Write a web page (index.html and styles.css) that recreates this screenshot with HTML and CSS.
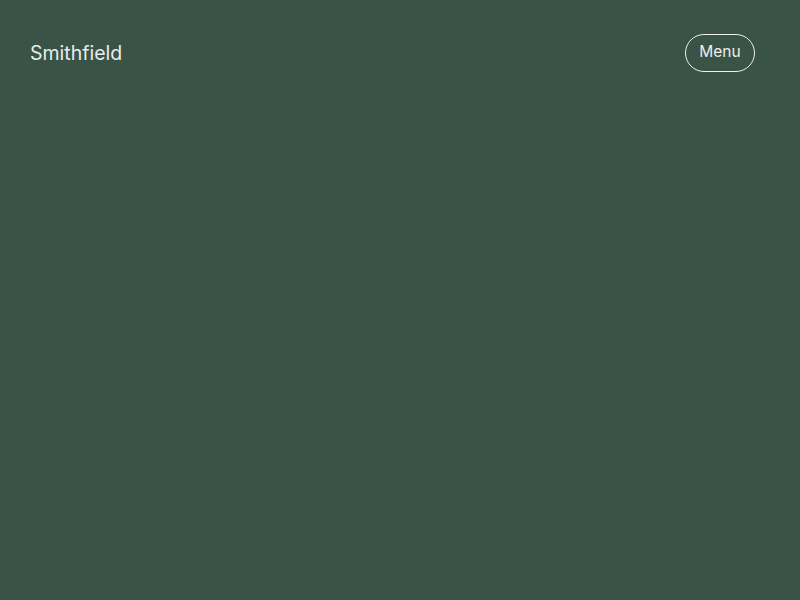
FILE: index.html
```html
<!DOCTYPE html>
<html lang="en">
<head>
    <meta charset="UTF-8">
    <meta name="viewport" content="width=device-width, initial-scale=1.0">
    <title>Smithfield</title>
    <link rel="stylesheet" href="styles.css">
</head>
<body>
    <header class="site-header">
        <a class="logo" href="#">Smithfield</a>
        <button class="menu-btn">Menu</button>
    </header>

    <main class="page-body"></main>
</body>
</html>
```

FILE: styles.css
```css
body {
    font-family: Inter, "Noto Sans", sans-serif;
    background-color: #3a5347;
    color: #eef0ec;
    margin: 0;
}
.site-header {
    display: flex;
    justify-content: space-between;
    align-items: center;
    padding: 34px 45px 0 30px;
}
.logo {
    color: #e9ece8;
    text-decoration: none;
    font-size: 19.5px;
    font-weight: 400;
}
.menu-btn {
    font-family: inherit;
    background: transparent;
    color: #eef0ec;
    border: 1px solid #eef0ec;
    border-radius: 20px;
    width: 70px;
    height: 38px;
    font-size: 15.5px;
    line-height: 1;
    padding: 0 0 2px;
    cursor: pointer;
}
.page-body {
    height: 6500px;
}
```
